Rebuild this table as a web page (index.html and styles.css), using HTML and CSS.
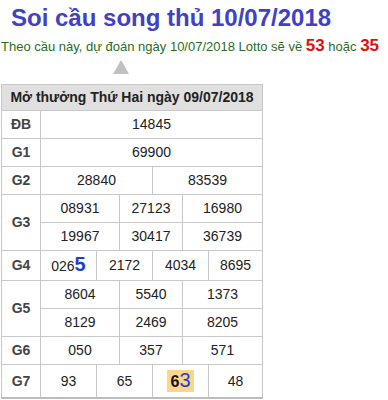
FILE: index.html
```html
<!DOCTYPE html>
<html lang="vi">
  <head>
    <meta charset="UTF-8" />
    <meta name="viewport" content="width=device-width, initial-scale=1.0" />
    <title>Soi cầu song thủ 10/07/2018</title>
    <link rel="stylesheet" href="styles.css">
  </head>
  <body>
    <h1 class="title">Soi cầu song thủ 10/07/2018</h1>
    <p class="predict">
      Theo cầu này, dự đoán ngày 10/07/2018 Lotto sẽ về <b class="hot">53</b> hoặc <b class="hot">35</b>
    </p>
    <div class="arrow"></div>
    <table class="result">
      <colgroup>
        <col class="c-label" />
        <col class="c1" />
        <col class="c2" />
        <col class="c3" />
        <col class="c4" />
        <col class="c5" />
        <col class="c6" />
      </colgroup>
      <tr>
        <th class="head" colspan="7">Mở thưởng Thứ Hai ngày 09/07/2018</th>
      </tr>
      <tr>
        <td class="label">ĐB</td>
        <td colspan="6">14845</td>
      </tr>
      <tr>
        <td class="label">G1</td>
        <td colspan="6">69900</td>
      </tr>
      <tr>
        <td class="label">G2</td>
        <td colspan="3">28840</td>
        <td colspan="3">83539</td>
      </tr>
      <tr>
        <td class="label" rowspan="2">G3</td>
        <td colspan="2">08931</td>
        <td colspan="2">27123</td>
        <td colspan="2">16980</td>
      </tr>
      <tr>
        <td colspan="2">19967</td>
        <td colspan="2">30417</td>
        <td colspan="2">36739</td>
      </tr>
      <tr class="tall">
        <td class="label">G4</td>
        <td>026<span class="pick">5</span></td>
        <td colspan="2">2172</td>
        <td colspan="2">4034</td>
        <td>8695</td>
      </tr>
      <tr>
        <td class="label" rowspan="2">G5</td>
        <td colspan="2">8604</td>
        <td colspan="2">5540</td>
        <td colspan="2">1373</td>
      </tr>
      <tr>
        <td colspan="2">8129</td>
        <td colspan="2">2469</td>
        <td colspan="2">8205</td>
      </tr>
      <tr>
        <td class="label">G6</td>
        <td colspan="2">050</td>
        <td colspan="2">357</td>
        <td colspan="2">571</td>
      </tr>
      <tr class="tall">
        <td class="label">G7</td>
        <td>93</td>
        <td colspan="2">65</td>
        <td colspan="2"><span class="match"><b>6</b><span class="hit">3</span></span></td>
        <td>48</td>
      </tr>
    </table>
  </body>
</html>
```

FILE: styles.css
```css
body {
  margin: 0;
  padding: 0 0 0 1px;
  background-color: white;
  font-family: "Liberation Sans", Arial, sans-serif;
  color: #222;
}
.title {
  margin: 4px 0 0 10px;
  font-size: 24px;
  line-height: 28px;
  font-weight: bold;
  color: #4141c4;
}
.predict {
  margin: 5px 0 0 0;
  font-size: 13px;
  line-height: 18px;
  color: #2d6b1f;
  white-space: nowrap;
}
.hot {
  font-size: 17px;
  color: #e01010;
}
.arrow {
  width: 0;
  height: 0;
  margin: 4px 0 0 112px;
  border-left: 8px solid transparent;
  border-right: 8px solid transparent;
  border-bottom: 14px solid #c0c0c0;
}
.result {
  margin-top: 10px;
  width: 262px;
  table-layout: fixed;
  border-collapse: collapse;
  border-bottom: 2px solid #bdbdbd;
}
.c-label {
  width: 39px;
}
.c1 {
  width: 56px;
}
.c2 {
  width: 23px;
}
.c3 {
  width: 33px;
}
.c4 {
  width: 30px;
}
.c5 {
  width: 26px;
}
.c6 {
  width: 54px;
}
.result th,
.result td {
  border: 1px solid #c8c8c8;
  text-align: center;
  padding: 6px 0;
  font-size: 14px;
  line-height: 15px;
}
.result .head {
  padding: 5px 0;
  background-color: #e0e0e0;
  font-size: 14px;
  font-weight: bold;
  color: #222;
}
.result .label {
  font-weight: bold;
  color: #444;
}
.result .tall td {
  height: 19px;
  padding: 5px 0;
}
.pick {
  font-size: 20px;
  line-height: 15px;
  font-weight: bold;
  color: #1c3fd0;
}
.match {
  display: inline-block;
  padding: 0 3px;
  background-color: #fcd58a;
  line-height: 20px;
  vertical-align: middle;
}
.match b {
  font-size: 16px;
  color: #111;
}
.hit {
  font-size: 20px;
  color: #1c3fd0;
}
```
